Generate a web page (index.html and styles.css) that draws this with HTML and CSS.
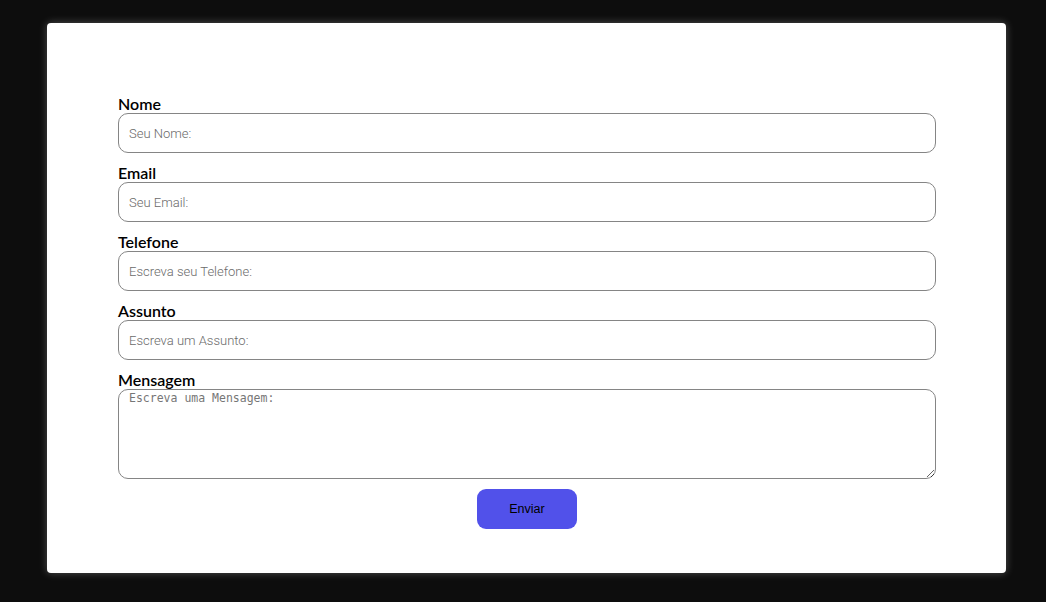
FILE: index.html
```html
<!DOCTYPE html>
<html lang="pt">
<head>
<meta charset="utf-8">
<title>Contato</title>
<link rel="stylesheet" href="styles.css">
</head>
<body>
<main class="card">
  <form class="form">
    <div class="field">
      <label class="label" for="nome">Nome</label>
      <input class="input" id="nome" type="text" placeholder="Seu Nome:">
    </div>
    <div class="field">
      <label class="label" for="email">Email</label>
      <input class="input" id="email" type="email" placeholder="Seu Email:">
    </div>
    <div class="field">
      <label class="label" for="tel">Telefone</label>
      <input class="input" id="tel" type="tel" placeholder="Escreva seu Telefone:">
    </div>
    <div class="field">
      <label class="label" for="assunto">Assunto</label>
      <input class="input" id="assunto" type="text" placeholder="Escreva um Assunto:">
    </div>
    <div class="field field-last">
      <label class="label" for="msg">Mensagem</label>
      <textarea class="textarea" id="msg" placeholder="Escreva uma Mensagem:"></textarea>
    </div>
    <div class="actions">
      <button class="button" type="button">Enviar</button>
    </div>
  </form>
</main>
</body>
</html>
```
FILE: styles.css
```css
* { box-sizing: border-box; }
html, body { margin: 0; padding: 0; }
body {
  background: #0d0d0d;
  width: 1046px;
  height: 602px;
  overflow: hidden;
  padding: 23px 0 0 47px;
}
.card {
  width: 959px;
  height: 550px;
  background: #fff;
  border-radius: 4px;
  box-shadow: 0 0 8px rgba(255, 255, 255, 0.28);
  padding: 72px 70px 0 71px;
}
.form {
  display: flex;
  flex-direction: column;
}
.field {
  display: flex;
  flex-direction: column;
  margin-bottom: 11px;
}
.field-last {
  margin-bottom: 10px;
}
.label {
  font-family: Lato, "Noto Sans", sans-serif;
  font-size: 16px;
  font-weight: 600;
  line-height: 18px;
  color: #000;
}
.input, .textarea {
  width: 818px;
  border: 1px solid #858585;
  border-radius: 10px;
  background: #fff;
  outline: none;
}
.input {
  height: 40px;
  padding: 0 10px;
  font-family: Roboto, "Liberation Sans", sans-serif;
  font-size: 13px;
  font-weight: 300;
}
.input::placeholder {
  color: #6a6a6a;
}
.textarea {
  height: 90px;
  padding: 1px 10px;
  font-family: "DejaVu Sans Mono", "Liberation Mono", monospace;
  font-size: 11.5px;
  resize: vertical;
}
.textarea::placeholder {
  color: #767676;
}
.actions {
  display: flex;
  justify-content: center;
}
.button {
  width: 100px;
  height: 40px;
  border: none;
  border-radius: 9px;
  background: #5151ea;
  color: #000;
  font-family: "Liberation Sans", Arial, sans-serif;
  font-size: 12.5px;
  cursor: pointer;
}
```
